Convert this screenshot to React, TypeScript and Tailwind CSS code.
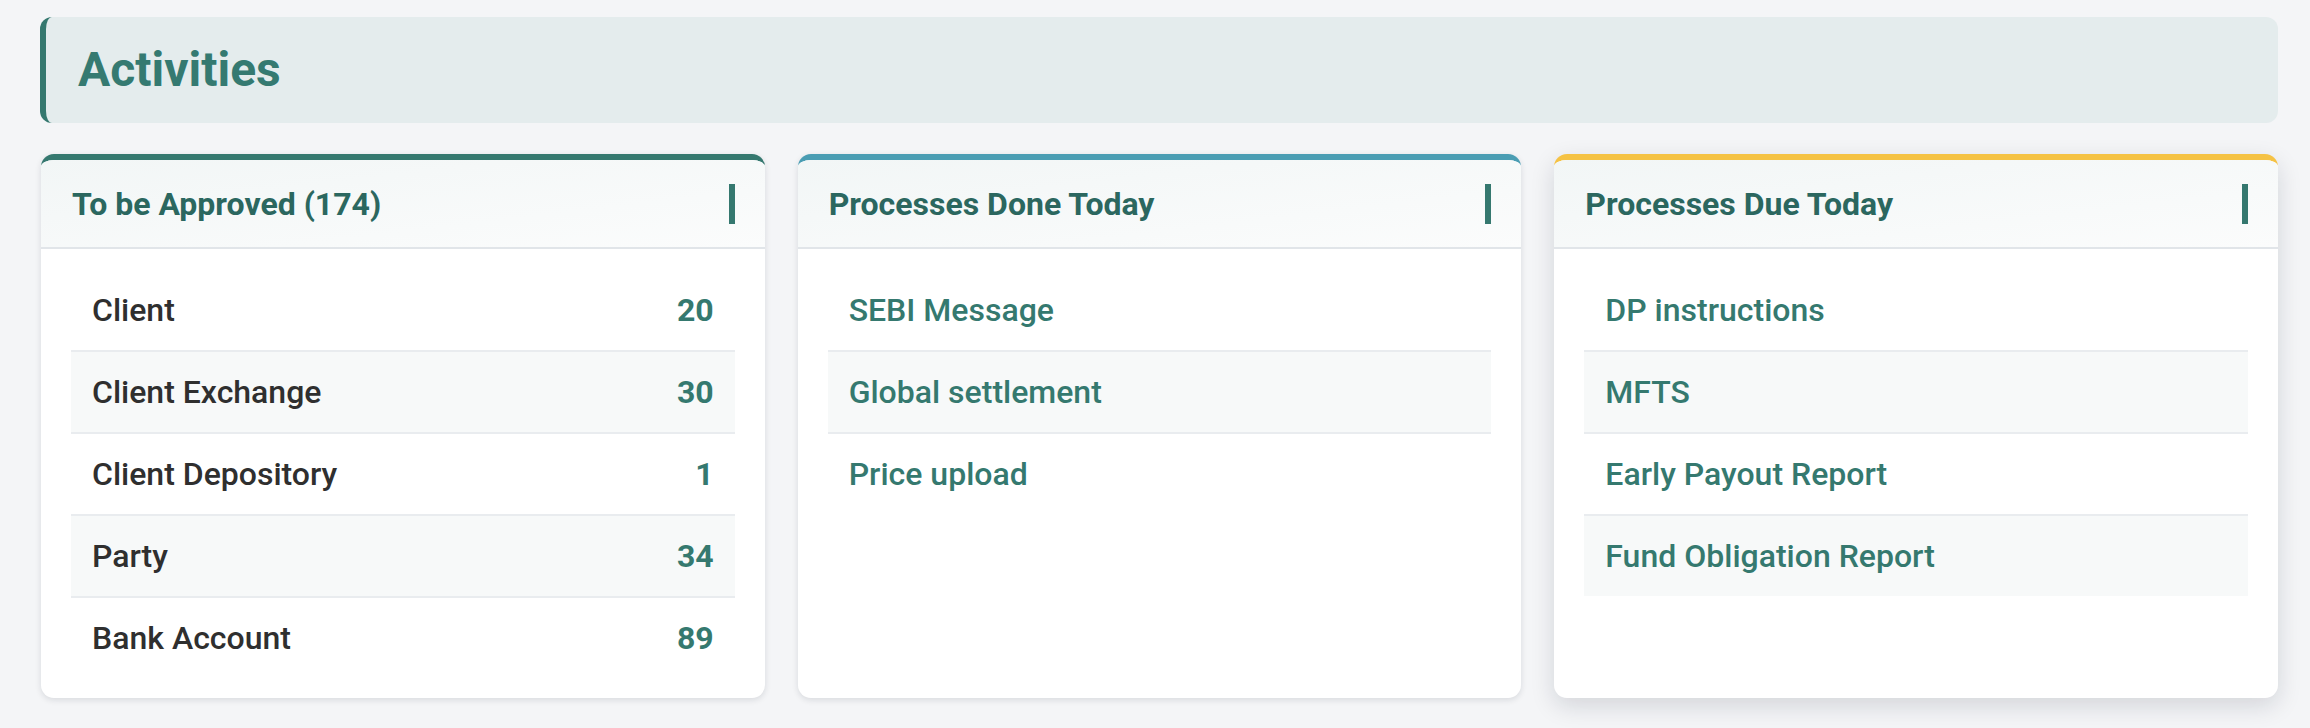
const approvals = [
  { label: 'Client', count: 20 },
  { label: 'Client Exchange', count: 30 },
  { label: 'Client Depository', count: 1 },
  { label: 'Party', count: 34 },
  { label: 'Bank Account', count: 89 }
]

const doneToday = ['SEBI Message', 'Global settlement', 'Price upload']
const dueToday = ['DP instructions', 'MFTS', 'Early Payout Report', 'Fund Obligation Report']

function Card({ title, accent, shadow, children }: { title: string; accent: string; shadow: string; children: React.ReactNode }) {
  return (
    <div className={`bg-white rounded-[13px] border-t-[6px] ${accent} ${shadow} overflow-hidden flex flex-col`}>
      <div className="h-[89px] flex items-center justify-between pl-[31px] pr-[30px] border-b-2 border-[#e1e5e9] bg-gradient-to-br from-[#f2f6f6] to-[#fbfcfc]">
        <h2 className="text-[32px] font-bold text-[#2b675f] leading-none">{title}</h2>
        <span className="w-[6px] h-[40px] bg-[#35786f]" />
      </div>
      <div className="px-[30px] pt-[21px] pb-[20px]">{children}</div>
    </div>
  )
}

function Row({ index, last, children }: { index: number; last: boolean; children: React.ReactNode }) {
  return (
    <div
      className={`h-[80px] box-content flex items-center justify-between px-[21px] text-[32px] font-medium ${index % 2 === 1 ? 'bg-[#f7f9f9]' : 'bg-white'} ${last ? '' : 'border-b-2 border-[#e9ecef]'}`}
    >
      {children}
    </div>
  )
}

export default function App() {
  return (
    <main className="min-h-screen bg-[#f4f5f7] pl-[40px] pr-[32px] pt-[17px] pb-[30px]" style={{ fontFamily: 'Roboto, "Liberation Sans", sans-serif' }}>
      <div className="h-[106px] flex items-center rounded-[12px] border-l-[6px] border-[#35786f] bg-[#e4eced] pl-[32px]">
        <h1 className="text-[48px] font-bold text-[#357a71] leading-none">Activities</h1>
      </div>

      <div className="grid grid-cols-3 gap-[33px] mt-[31px] pl-px">
        <Card title="To be Approved (174)" accent="border-[#35786f]" shadow="shadow-[0_2px_6px_rgba(15,23,42,0.12)]">
          {approvals.map((a, i) => (
            <Row key={a.label} index={i} last={i === approvals.length - 1}>
              <span className="text-[#2f2f2f]">{a.label}</span>
              <span className="font-bold text-[#35796f]">{a.count}</span>
            </Row>
          ))}
        </Card>

        <Card title="Processes Done Today" accent="border-[#4a9db3]" shadow="shadow-[0_2px_6px_rgba(15,23,42,0.12)]">
          {doneToday.map((p, i) => (
            <Row key={p} index={i} last={i === doneToday.length - 1}>
              <span className="text-[#35796f]">{p}</span>
            </Row>
          ))}
        </Card>

        <Card title="Processes Due Today" accent="border-[#f5c244]" shadow="shadow-[0_8px_24px_rgba(15,23,42,0.14)]">
          {dueToday.map((p, i) => (
            <Row key={p} index={i} last={i === dueToday.length - 1}>
              <span className="text-[#35796f]">{p}</span>
            </Row>
          ))}
        </Card>
      </div>
    </main>
  )
}
